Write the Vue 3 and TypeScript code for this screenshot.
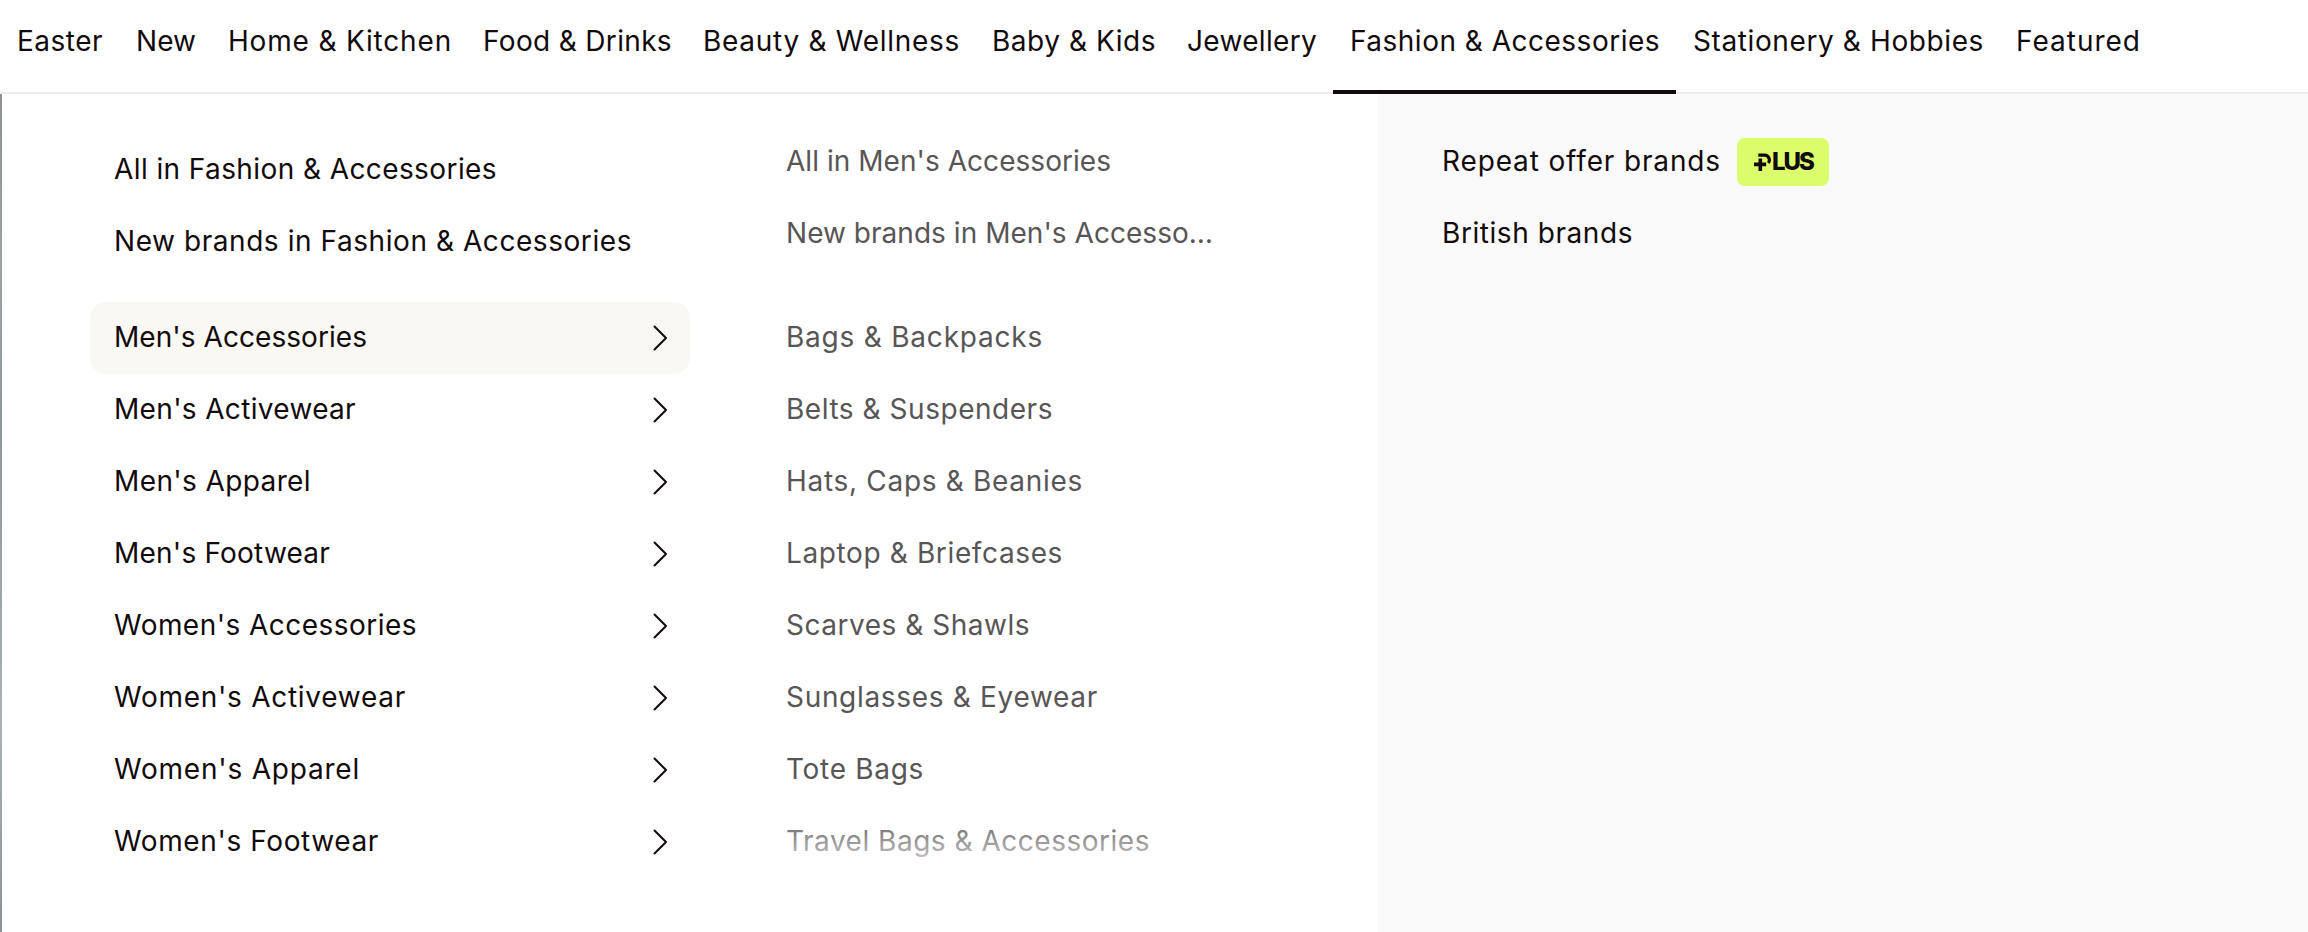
<script setup lang="ts">
import { ref } from 'vue';
import type { Directive } from 'vue';

interface MenuLink {
  label: string;
  width: number;
}

interface NavLink extends MenuLink {
  tab: number;
}

const navLinks: NavLink[] = [
  { label: 'Easter', width: 86, tab: 119 },
  { label: 'New', width: 60, tab: 92 },
  { label: 'Home & Kitchen', width: 224, tab: 255 },
  { label: 'Food & Drinks', width: 189, tab: 220 },
  { label: 'Beauty & Wellness', width: 257, tab: 289 },
  { label: 'Baby & Kids', width: 164, tab: 195 },
  { label: 'Jewellery', width: 130, tab: 163 },
  { label: 'Fashion & Accessories', width: 310, tab: 343 },
  { label: 'Stationery & Hobbies', width: 291, tab: 323 },
  { label: 'Featured', width: 125, tab: 157 },
];

const overviewLinks: MenuLink[] = [
  { label: 'All in Fashion & Accessories', width: 383 },
  { label: 'New brands in Fashion & Accessories', width: 518 },
];

const categories: MenuLink[] = [
  { label: "Men's Accessories", width: 253 },
  { label: "Men's Activewear", width: 242 },
  { label: "Men's Apparel", width: 197 },
  { label: "Men's Footwear", width: 216 },
  { label: "Women's Accessories", width: 303 },
  { label: "Women's Activewear", width: 292 },
  { label: "Women's Apparel", width: 246 },
  { label: "Women's Footwear", width: 265 },
];

const subOverviewLinks: MenuLink[] = [
  { label: "All in Men's Accessories", width: 325 },
  { label: "New brands in Men's Accesso…", width: 427 },
];

const subCategories: MenuLink[] = [
  { label: 'Bags & Backpacks', width: 257 },
  { label: 'Belts & Suspenders', width: 267 },
  { label: 'Hats, Caps & Beanies', width: 297 },
  { label: 'Laptop & Briefcases', width: 277 },
  { label: 'Scarves & Shawls', width: 244 },
  { label: 'Sunglasses & Eyewear', width: 312 },
  { label: 'Tote Bags', width: 138 },
  { label: 'Travel Bags & Accessories', width: 364 },
];

const activeNav = ref('Fashion & Accessories');
const activeCategory = ref("Men's Accessories");

// Spread the letters so that each label takes up its set width
const vTrack: Directive<HTMLElement, number> = {
  mounted(el, { value }) {
    const natural = el.getBoundingClientRect().width;
    const count = el.textContent?.length ?? 1;
    el.style.letterSpacing = `${(value - natural) / count}px`;
  },
};
</script>

<template>
  <div class="page">
    <nav class="nav">
      <a
        v-for="link in navLinks"
        :key="link.label"
        class="nav-link"
        :class="{ active: link.label === activeNav }"
        :style="{ width: `${link.tab}px` }"
        @click="activeNav = link.label"
      >
        <span v-track="link.width" class="label">{{ link.label }}</span>
      </a>
    </nav>

    <div class="mega-menu">
      <section class="categories">
        <ul class="list overview">
          <li v-for="link in overviewLinks" :key="link.label" class="row">
            <span v-track="link.width" class="label">{{ link.label }}</span>
          </li>
        </ul>
        <ul class="list">
          <li
            v-for="link in categories"
            :key="link.label"
            class="row"
            :class="{ selected: link.label === activeCategory }"
            @click="activeCategory = link.label"
          >
            <span v-track="link.width" class="label">{{ link.label }}</span>
            <svg
              class="chevron"
              width="18"
              height="28"
              viewBox="0 0 18 28"
              fill="none"
              stroke="currentColor"
              stroke-width="2"
              stroke-linecap="round"
              stroke-linejoin="round"
            >
              <polyline points="2.5 2.5 14 14 2.5 25.5" />
            </svg>
          </li>
        </ul>
      </section>

      <section class="sub-categories">
        <ul class="list overview">
          <li v-for="link in subOverviewLinks" :key="link.label" class="row">
            <span v-track="link.width" class="label">{{ link.label }}</span>
          </li>
        </ul>
        <ul class="list">
          <li v-for="link in subCategories" :key="link.label" class="row">
            <span v-track="link.width" class="label">{{ link.label }}</span>
          </li>
        </ul>
        <div class="fade" />
      </section>

      <aside class="highlights">
        <ul class="list">
          <li class="row">
            <span v-track="279" class="label">Repeat offer brands</span>
            <span class="plus-badge">
              <svg class="plus-mark" width="18" height="18" viewBox="0 0 18 18" fill="none" stroke="currentColor">
                <path d="M6.3 5.5v12.5M0 11.4h12.2" stroke-width="3.6" />
                <path d="M4.3 2.2h6.4a4.8 4.8 0 0 1 3.6 7.8" stroke-width="3.2" />
              </svg>
              <span v-track="41" class="plus-text">LUS</span>
            </span>
          </li>
          <li class="row">
            <span v-track="191" class="label">British brands</span>
          </li>
        </ul>
      </aside>
    </div>
  </div>
</template>

<style>
body {
  margin: 0;
  background: #fff;
}
</style>

<style scoped>
.page {
  display: flex;
  flex-direction: column;
  width: 100%;
  height: 932px;
  overflow: hidden;
  background: #fff;
  color: #120a0c;
  font-family: Inter, 'Liberation Sans', sans-serif;
  font-size: 28px;
  line-height: 32px;
}

.label {
  white-space: nowrap;
}

/* Top navigation */
.nav {
  display: flex;
  flex: none;
  height: 94px;
  box-shadow: inset 0 -2px #ededed;
}

.nav-link {
  display: flex;
  flex: none;
  box-sizing: border-box;
  padding: 25px 0 0 17px;
  cursor: pointer;
}

.nav-link.active {
  box-shadow: inset 0 -4px #120a0c;
}

/* Mega menu */
.mega-menu {
  display: flex;
  flex: 1;
}

.mega-menu::before {
  content: '';
  width: 2px;
  background: linear-gradient(#8d9192, #9da3a4 20%, #8f969c 40%, #a9b0b8 75%, #8b9197);
}

.list {
  margin: 0;
  padding: 0;
  list-style: none;
}

.row {
  display: flex;
  align-items: center;
  box-sizing: border-box;
  height: 72px;
  border-radius: 16px;
  cursor: pointer;
}

.row .label {
  padding-bottom: 2px;
}

.categories {
  width: 600px;
  padding: 40px 0 0 88px;
}

.categories .row {
  justify-content: space-between;
  padding: 0 20px 0 24px;
}

.categories .overview {
  margin-bottom: 24px;
}

.row.selected {
  background: #f9f8f3;
}

.sub-categories {
  position: relative;
  box-sizing: border-box;
  width: 688px;
  padding: 32px 0 0 96px;
  color: #585556;
}

.sub-categories .overview {
  margin-bottom: 32px;
}

.fade {
  position: absolute;
  top: 719px;
  right: 0;
  left: 0;
  height: 72px;
  background: linear-gradient(rgba(255, 255, 255, 0), #fff);
}

.highlights {
  flex: 1;
  padding: 32px 0 0 64px;
  background: #f9f9f9;
}

.plus-badge {
  display: flex;
  align-items: center;
  box-sizing: border-box;
  width: 92px;
  height: 48px;
  margin-left: 16px;
  padding-left: 17px;
  border-radius: 8px;
  background: #dbfd6b;
}

.plus-text {
  font-size: 24px;
  font-weight: 800;
}
</style>
